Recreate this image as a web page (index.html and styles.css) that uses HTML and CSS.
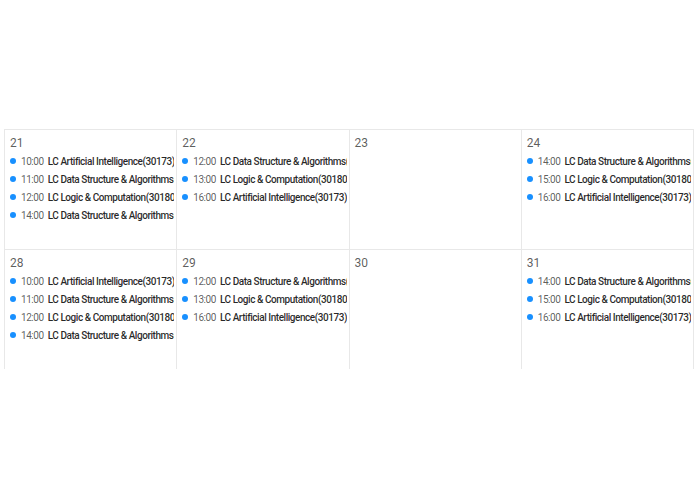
FILE: index.html
```html
<!DOCTYPE html>
<html>
<head>
<meta charset="utf-8">
<link rel="stylesheet" href="styles.css">
</head>
<body>
<div class="page">
  <div class="top-space"></div>
  <div class="grid">
    <div class="cell">
      <div class="day">21</div>
      <ul class="events">
        <li><span class="dot"></span><span class="time">10:00</span><span class="title">LC Artificial Intelligence(30173)</span></li>
        <li><span class="dot"></span><span class="time">11:00</span><span class="title">LC Data Structure &amp; Algorithms(30174)</span></li>
        <li><span class="dot"></span><span class="time">12:00</span><span class="title">LC Logic &amp; Computation(30180)</span></li>
        <li><span class="dot"></span><span class="time">14:00</span><span class="title">LC Data Structure &amp; Algorithms(30174)</span></li>
      </ul>
    </div>
    <div class="cell">
      <div class="day">22</div>
      <ul class="events">
        <li><span class="dot"></span><span class="time">12:00</span><span class="title">LC Data Structure &amp; Algorithms(30174)</span></li>
        <li><span class="dot"></span><span class="time">13:00</span><span class="title">LC Logic &amp; Computation(30180)</span></li>
        <li><span class="dot"></span><span class="time">16:00</span><span class="title">LC Artificial Intelligence(30173)</span></li>
      </ul>
    </div>
    <div class="cell">
      <div class="day">23</div>
    </div>
    <div class="cell">
      <div class="day">24</div>
      <ul class="events">
        <li><span class="dot"></span><span class="time">14:00</span><span class="title">LC Data Structure &amp; Algorithms(30174)</span></li>
        <li><span class="dot"></span><span class="time">15:00</span><span class="title">LC Logic &amp; Computation(30180)</span></li>
        <li><span class="dot"></span><span class="time">16:00</span><span class="title">LC Artificial Intelligence(30173)</span></li>
      </ul>
    </div>
    <div class="cell">
      <div class="day">28</div>
      <ul class="events">
        <li><span class="dot"></span><span class="time">10:00</span><span class="title">LC Artificial Intelligence(30173)</span></li>
        <li><span class="dot"></span><span class="time">11:00</span><span class="title">LC Data Structure &amp; Algorithms(30174)</span></li>
        <li><span class="dot"></span><span class="time">12:00</span><span class="title">LC Logic &amp; Computation(30180)</span></li>
        <li><span class="dot"></span><span class="time">14:00</span><span class="title">LC Data Structure &amp; Algorithms(30174)</span></li>
      </ul>
    </div>
    <div class="cell">
      <div class="day">29</div>
      <ul class="events">
        <li><span class="dot"></span><span class="time">12:00</span><span class="title">LC Data Structure &amp; Algorithms(30174)</span></li>
        <li><span class="dot"></span><span class="time">13:00</span><span class="title">LC Logic &amp; Computation(30180)</span></li>
        <li><span class="dot"></span><span class="time">16:00</span><span class="title">LC Artificial Intelligence(30173)</span></li>
      </ul>
    </div>
    <div class="cell">
      <div class="day">30</div>
    </div>
    <div class="cell">
      <div class="day">31</div>
      <ul class="events">
        <li><span class="dot"></span><span class="time">14:00</span><span class="title">LC Data Structure &amp; Algorithms(30174)</span></li>
        <li><span class="dot"></span><span class="time">15:00</span><span class="title">LC Logic &amp; Computation(30180)</span></li>
        <li><span class="dot"></span><span class="time">16:00</span><span class="title">LC Artificial Intelligence(30173)</span></li>
      </ul>
    </div>
  </div>
</div>
</body>
</html>
```

FILE: styles.css
```css
html, body {
  margin: 0;
  padding: 0;
  background: #fff;
}
.page {
  width: 695px;
  height: 494px;
  font-family: Roboto, "Liberation Sans", sans-serif;
  color: rgba(0, 0, 0, 0.85);
}
.top-space {
  height: 129px;
}
.grid {
  margin-left: 4px;
  width: 689px;
  display: grid;
  grid-template-columns: repeat(4, 1fr);
  border-right: 1px solid #e8e8e8;
}
.cell {
  box-sizing: border-box;
  height: 120px;
  border-top: 1px solid #e8e8e8;
  border-left: 1px solid #e8e8e8;
  padding: 5px 2px 0 5px;
  overflow: hidden;
  white-space: nowrap;
}
.day {
  font-size: 12px;
  line-height: 16px;
  color: rgba(0, 0, 0, 0.65);
  margin-bottom: 1px;
}
.events {
  list-style: none;
  margin: 0;
  padding: 0;
}
.events li {
  height: 18px;
  display: flex;
  align-items: center;
  font-size: 10px;
  letter-spacing: -0.45px;
  overflow: hidden;
}
.dot {
  flex: none;
  width: 6px;
  height: 6px;
  border-radius: 50%;
  background: #1890ff;
  margin-right: 5px;
}
.time {
  color: rgba(0, 0, 0, 0.65);
  margin-right: 4px;
}
.title {
  font-weight: 500;
  color: rgba(0, 0, 0, 0.85);
}
```
